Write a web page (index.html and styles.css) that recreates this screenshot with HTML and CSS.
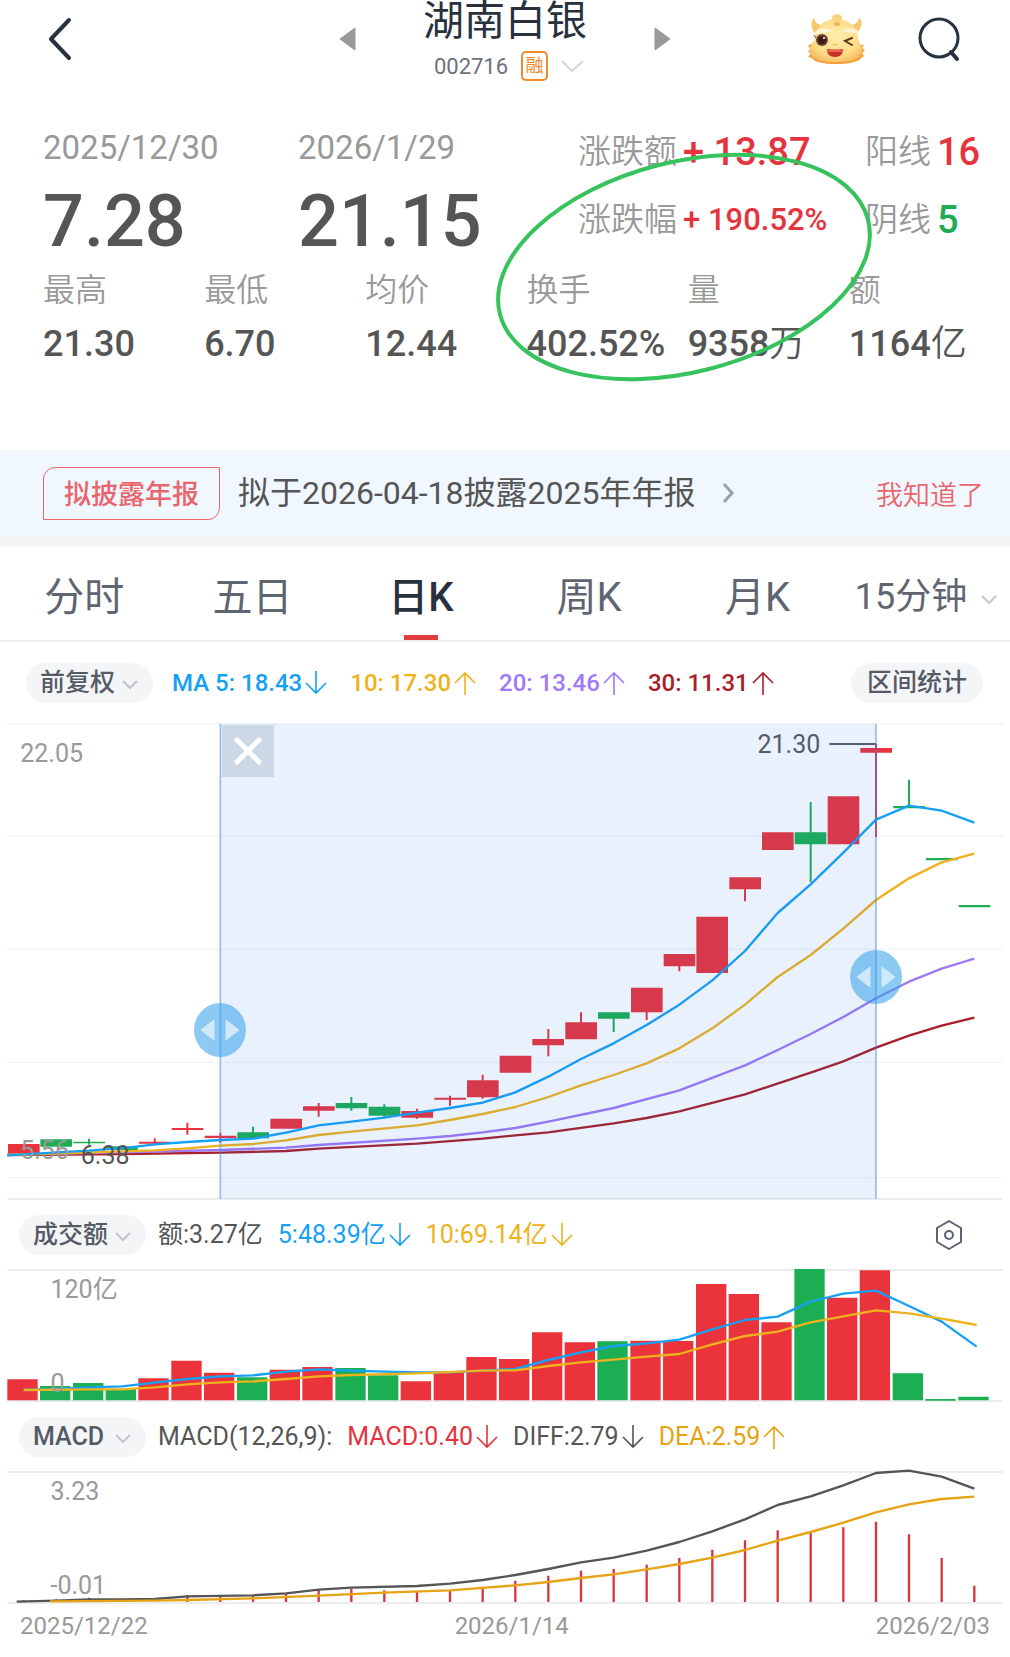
FILE: index.html
```html
<!DOCTYPE html>
<html lang="zh-CN">
<head>
<meta charset="utf-8">
<meta name="viewport" content="width=device-width, initial-scale=1">
<title>湖南白银 002716</title>
<link rel="stylesheet" href="styles.css">
</head>
<body>
<svg class="defs" aria-hidden="true">
  <symbol id="down" viewBox="0 0 22 24"><path d="M11 0V22M1 12L11 22L21 12" fill="none" stroke="currentColor" stroke-width="1.6"/></symbol>
  <symbol id="up" viewBox="0 0 22 24"><path d="M11 24V2M1 12L11 2L21 12" fill="none" stroke="currentColor" stroke-width="1.6"/></symbol>
  <symbol id="chev" viewBox="0 0 16 10"><path d="M1 1L8 8L15 1" fill="none" stroke="currentColor" stroke-width="2"/></symbol>
  <symbol id="drag" viewBox="0 0 52 54"><ellipse cx="26" cy="27" rx="26" ry="27" fill="#2f9fea" fill-opacity=".55"/><path d="M7 27L20 17V37ZM45 27L32 17V37Z" fill="#cfe9fb" stroke="#cfe9fb" stroke-width="1" stroke-linejoin="round"/></symbol>
</svg>

<header class="topbar">
  <button class="icon-btn back" aria-label="返回"><svg width="28" height="46" viewBox="0 0 28 46"><path d="M24 4L6 23L24 42" fill="none" stroke="#27323e" stroke-width="4" stroke-linecap="round" stroke-linejoin="round"/></svg></button>
  <div class="stock">
    <button class="icon-btn" aria-label="上一只"><svg width="17" height="24" viewBox="0 0 17 24"><path d="M16 1V23L1 12Z" fill="#999" stroke="#999" stroke-linejoin="round"/></svg></button>
    <div class="stock-name">
      <h1>湖南白银</h1>
      <div class="code"><span>002716</span><span class="margin-tag">融</span><svg width="23" height="13" viewBox="0 0 23 13"><path d="M1 1L11 11L22 1" fill="none" stroke="#d3d6dc" stroke-width="2"/></svg></div>
    </div>
    <button class="icon-btn" aria-label="下一只"><svg width="17" height="24" viewBox="0 0 17 24"><path d="M1 1V23L16 12Z" fill="#999" stroke="#999" stroke-linejoin="round"/></svg></button>
  </div>
  <div class="tools">
    <button class="icon-btn" aria-label="助手">
      <svg width="58" height="54" viewBox="0 0 58 54">
        <defs>
          <radialGradient id="face" cx=".5" cy=".4" r=".65"><stop offset="0" stop-color="#ffedb0"/><stop offset=".7" stop-color="#fcdc86"/><stop offset="1" stop-color="#f7b95c"/></radialGradient>
        </defs>
        <path d="M8 22C3 15 4 8 7 6C8 11 12 13 16 14ZM49 22C56 15 56 8 52 6C51 11 47 13 43 14Z" fill="#f8c66d"/>
        <path d="M3 32L1 35L4 36L1 40L4 41L1 45L5 46C8 54 50 54 54 46L57 44L55 41L58 38L55 36L57 33Z" fill="#f5a03c"/>
        <path d="M29 7C42 7 50 14 51 26C52 31 56 35 55 40C53 48 43 50 29 50C14 50 4 48 3 40C2 34 6 31 8 26C9 14 17 7 29 7Z" fill="url(#face)"/>
        <ellipse cx="30" cy="6" rx="5" ry="4" fill="#f9d27c"/><ellipse cx="30" cy="12" rx="3" ry="2" fill="#efb257"/>
        <path d="M7 22C10 15 20 15 26 19C20 20 13 21 10 22ZM34 19C40 15 49 15 53 21C47 21 40 21 34 19Z" fill="#fff4d2"/>
        <ellipse cx="15" cy="28" rx="6" ry="6" fill="#754030"/><circle cx="15" cy="28" r="4" fill="#3a1d1a"/><circle cx="17" cy="26" r="1" fill="#fff"/>
        <path d="M9 26L7 23" stroke="#6b3922" stroke-width="1"/>
        <path d="M45 26L38 29L45 33" fill="none" stroke="#64351f" stroke-width="2" stroke-linecap="round"/>
        <path d="M25 32L28 34L31 32Z" fill="#f5bf61"/>
        <path d="M20 37Q28 38 36 37Q36 45 28 45Q20 45 20 37Z" fill="#c82f28"/><path d="M21 38H35V40H21Z" fill="#ee6350"/>
      </svg>
    </button>
    <button class="icon-btn" aria-label="搜索"><svg width="42" height="46" viewBox="0 0 42 46"><circle cx="21" cy="22" r="19" fill="none" stroke="#27323e" stroke-width="3"/><path d="M33 36L39 43" stroke="#27323e" stroke-width="4" stroke-linecap="round"/></svg></button>
  </div>
</header>

<main>
<section class="summary">
  <div class="summary-top">
    <div><p class="date">2025/12/30</p><p class="price">7.28</p></div>
    <div><p class="date">2026/1/29</p><p class="price">21.15</p></div>
    <div class="pairs">
      <p>涨跌额<b class="red big">+ 13.87</b></p>
      <p>涨跌幅<b class="red">+ 190.52%</b></p>
    </div>
    <div class="pairs">
      <p>阳线<b class="red big">16</b></p>
      <p>阴线<b class="green big">5</b></p>
    </div>
  </div>
  <dl class="stats">
    <div><dt>最高</dt><dd>21.30</dd></div>
    <div><dt>最低</dt><dd>6.70</dd></div>
    <div><dt>均价</dt><dd>12.44</dd></div>
    <div><dt>换手</dt><dd>402.52%</dd></div>
    <div><dt>量</dt><dd>9358<span class="unit">万</span></dd></div>
    <div><dt>额</dt><dd>1164<span class="unit">亿</span></dd></div>
  </dl>
  <svg class="circle-mark" width="400" height="250" viewBox="484 142 400 250" aria-hidden="true"><ellipse cx="684" cy="267" rx="190" ry="105" transform="rotate(-14.4 684 267)" fill="none" stroke="#36c25c" stroke-width="4"/></svg>
</section>

<section class="notice">
  <span class="notice-tag">拟披露年报</span>
  <a href="#report" class="notice-link">拟于2026-04-18披露2025年年报<svg width="13" height="22" viewBox="0 0 13 22"><path d="M2 2L10 11L2 20" fill="none" stroke="#9aa1ab" stroke-width="3"/></svg></a>
  <button class="dismiss">我知道了</button>
</section>

<nav class="tabs" aria-label="周期">
  <a href="#fs">分时</a>
  <a href="#d5">五日</a>
  <a href="#dk" class="active" aria-current="page">日K</a>
  <a href="#wk">周K</a>
  <a href="#mk">月K</a>
  <label class="period"><select aria-label="分钟周期"><option>15分钟</option></select><svg width="16" height="10"><use href="#chev"/></svg></label>
</nav>

<div class="bar ma-bar">
  <label class="pill"><select aria-label="复权"><option>前复权</option></select><svg width="16" height="10"><use href="#chev"/></svg></label>
  <div class="legend ma-legend">
    <span class="c-blue">MA 5: 18.43<svg width="22" height="24"><use href="#down"/></svg></span>
    <span class="c-yellow">10: 17.30<svg width="22" height="24"><use href="#up"/></svg></span>
    <span class="c-purple">20: 13.46<svg width="22" height="24"><use href="#up"/></svg></span>
    <span class="c-dark">30: 11.31<svg width="22" height="24"><use href="#up"/></svg></span>
  </div>
  <button class="pill range-btn">区间统计</button>
</div>

<section class="chart kline" aria-label="日K线">
  <svg class="plot" viewBox="0 0 3030 1470">
    <g stroke="#f1f1f3" stroke-width="4" stroke-dasharray="18 6"><path d="M22 41H3008M22 379H3008M22 718H3008M22 1057H3008"/></g>
    <path d="M22 1403H3008" stroke="#f4f4f6" stroke-width="4"/>
    <path d="M22 1467H3008" stroke="#e4e5e7" stroke-width="5"/>
    <g class="up-fill">
      <path d="M24 1302h95v33h-95zM417 1295h95v6h-95zM515 1254h95v6h-95zM614 1277h95v7h-95zM811 1226h95v30h-95zM909 1189h95v13h-95zM1204 1203h95v20h-95zM1303 1163h95v6h-95zM1401 1111h95v51h-95zM1499 1037h95v51h-95zM1597 987h95v19h-95zM1696 937h95v51h-95zM1893 833h95v74h-95zM1991 732h95v37h-95zM2089 620h95v169h-95zM2188 502h95v36h-95zM2286 367h95v53h-95zM2483 259h95v144h-95zM2581 114h95v14h-95z"/>
      <path d="M464 1285v19M562 1238v36M661 1268v30M956 1179v41M1251 1196v30M1350 1157v30M1448 1094v72M1645 957v82M1743 907v40M1940 900v30M2038 760v24M2235 530v44M2628 102v279"/>
    </g>
    <g class="down-fill">
      <path d="M121 1288h95v22h-95zM220 1295h95v5h-95zM318 1309h95v11h-95zM712 1267h95v18h-95zM1007 1179h95v16h-95zM1106 1190h95v27h-95zM1794 907h95v19h-95zM2384 367h95v36h-95zM2680 288h95v7h-95zM2778 444h95v7h-95zM2876 585h95v7h-95z"/>
      <path d="M267 1286v18M759 1250v20M1054 1161v41M1153 1183v39M1841 920v46M2432 276v240M2727 209v83"/>
    </g>
    <g class="line">
      <polyline class="s-dark" points="22,1335 366,1332 661,1328 858,1323 956,1316 1251,1301 1448,1286 1546,1276 1645,1267 1841,1240 1940,1224 2038,1204 2235,1153 2432,1088 2530,1054 2628,1013 2727,977 2825,947 2923,923"/>
      <polyline class="s-purple" points="22,1334 366,1327 661,1320 858,1313 956,1305 1251,1286 1350,1278 1448,1267 1546,1254 1645,1235 1841,1194 2038,1141 2235,1066 2333,1020 2432,972 2530,921 2628,865 2727,815 2825,776 2923,746"/>
      <polyline class="s-yellow" points="22,1335 464,1321 562,1315 661,1307 759,1302 858,1291 956,1275 1054,1265 1251,1246 1350,1230 1448,1212 1546,1191 1645,1161 1743,1126 1841,1095 1940,1060 2038,1015 2137,955 2235,884 2333,801 2432,735 2530,656 2628,570 2727,505 2825,457 2923,431"/>
      <polyline class="s-blue" points="22,1336 169,1327 267,1322 390,1312 464,1303 562,1296 661,1290 759,1286 858,1268 956,1246 1054,1235 1153,1223 1251,1208 1350,1194 1448,1178 1546,1147 1645,1100 1743,1047 1841,1000 1940,945 2038,884 2137,811 2235,723 2333,609 2432,523 2530,428 2628,329 2727,287 2825,302 2923,338"/>
    </g>
    <path d="M2488 102H2628" stroke="#555b66" stroke-width="6"/>
    <rect x="661" y="41" width="1967" height="1426" fill="#287ae6" fill-opacity=".1"/>
    <path d="M661 41V1467M2628 41V1467" stroke="#3c82e6" stroke-opacity=".5" stroke-width="5"/>
  </svg>
  <span class="label k-max">22.05</span>
  <span class="label k-min">5.56</span>
  <span class="label k-low">6.38</span>
  <span class="label k-high">21.30</span>
  <button class="close" aria-label="关闭区间"><svg width="28" height="28" viewBox="0 0 28 28"><path d="M3 3L25 25M25 3L3 25" stroke="#fff" stroke-width="5" stroke-linecap="round"/></svg></button>
  <button class="handle start" aria-label="区间起点"><svg width="52" height="54"><use href="#drag"/></svg></button>
  <button class="handle end" aria-label="区间终点"><svg width="52" height="54"><use href="#drag"/></svg></button>
</section>

<div class="bar sub-bar">
  <label class="pill"><select aria-label="成交额指标"><option>成交额</option></select><svg width="16" height="10"><use href="#chev"/></svg></label>
  <div class="legend">
    <span>额:3.27亿</span>
    <span class="c-blue">5:48.39亿<svg width="22" height="24"><use href="#down"/></svg></span>
    <span class="c-yellow">10:69.14亿<svg width="22" height="24"><use href="#down"/></svg></span>
  </div>
  <button class="icon-btn settings" aria-label="指标设置"><svg width="28" height="32" viewBox="0 0 28 32"><path d="M14 2L26 9V23L14 30L2 23V9Z" fill="none" stroke="#5c6370" stroke-width="2" stroke-linejoin="round"/><circle cx="14" cy="16" r="4" fill="none" stroke="#5c6370" stroke-width="2"/></svg></button>
</div>

<section class="chart" aria-label="成交额">
  <svg class="plot" viewBox="0 225 3030 411">
    <path d="M22 240H3008M22 633H3008" stroke="#e6e7e9" stroke-width="5"/>
    <path class="up-fill" d="M22 568h91V631h-91zM415 565h91V631h-91zM514 512h91V631h-91zM612 548h91V631h-91zM809 539h91V631h-91zM907 531h91V631h-91zM1202 574h91V631h-91zM1301 548h91V631h-91zM1399 501h91V631h-91zM1497 507h91V631h-91zM1596 427h91V631h-91zM1694 457h91V631h-91zM1891 452h91V631h-91zM1989 453h91V631h-91zM2088 282h91V631h-91zM2186 312h91V631h-91zM2284 397h91V631h-91zM2481 323h91V631h-91zM2579 241h91V631h-91z"/>
    <path class="down-fill" d="M120 588h91V631h-91zM219 579h91V631h-91zM317 597h91V631h-91zM711 562h91V631h-91zM1006 534h91V631h-91zM1104 556h91V631h-91zM1792 454h91V631h-91zM2383 237h91V631h-91zM2678 550h91V631h-91zM2776 627h91V632h-91zM2875 620h91V631h-91z"/>
    <g class="line">
      <polyline class="s-blue" points="71,600 169,597 267,592 366,589 464,578 562,567 661,559 759,556 858,545 956,538 1054,542 1153,545 1251,547 1350,547 1448,542 1546,537 1645,510 1743,487 1841,468 1940,460 2038,449 2137,418 2235,390 2333,380 2432,335 2530,311 2628,302 2727,348 2825,395 2930,470"/>
      <polyline class="s-yellow" points="71,600 267,598 366,598 464,592 562,583 661,577 759,574 858,567 956,559 1054,555 1251,550 1448,542 1546,541 1645,528 1743,517 1841,509 1940,500 2038,492 2137,463 2235,438 2333,425 2432,397 2530,379 2628,361 2727,370 2825,386 2930,405"/>
    </g>
  </svg>
  <span class="label sub-max">120亿</span>
  <span class="label sub-min">0</span>
</section>

<div class="bar sub-bar">
  <label class="pill"><select aria-label="MACD指标"><option>MACD</option></select><svg width="16" height="10"><use href="#chev"/></svg></label>
  <div class="legend">
    <span>MACD(12,26,9):</span>
    <span class="red">MACD:0.40<svg width="22" height="24"><use href="#down"/></svg></span>
    <span>DIFF:2.79<svg width="22" height="24"><use href="#down"/></svg></span>
    <span class="c-amber">DEA:2.59<svg width="22" height="24"><use href="#up"/></svg></span>
  </div>
</div>

<section class="chart" aria-label="MACD">
  <svg class="plot" viewBox="0 831 3030 411">
    <path d="M22 846H3008M22 1239H3008" stroke="#e6e7e9" stroke-width="5"/>
    <path class="macd-bars" d="M71 1230V1236M169 1228V1236M267 1223V1236M562 1215V1236M661 1215V1236M759 1217V1236M858 1212V1236M956 1200V1236M1054 1196V1236M1153 1201V1236M1251 1205V1236M1350 1202V1236M1448 1192V1236M1546 1172V1236M1645 1157V1236M1743 1142V1236M1841 1137V1236M1940 1124V1236M2038 1104V1236M2137 1079V1236M2235 1051V1236M2333 1021V1236M2432 1027V1236M2530 1012V1236M2628 995V1236M2727 1033V1236M2825 1104V1236M2923 1187V1236"/>
    <g class="line">
      <polyline class="s-grey" points="50,1235 169,1232 267,1228 366,1228 464,1227 562,1219 759,1216 858,1210 956,1199 1054,1193 1251,1188 1350,1181 1448,1170 1546,1155 1645,1137 1743,1117 1841,1103 1940,1082 2038,1056 2137,1024 2235,988 2333,945 2432,919 2530,886 2628,849 2727,842 2825,860 2923,896"/>
      <polyline class="s-amber" points="150,1234 464,1232 562,1230 759,1225 956,1217 1153,1208 1350,1201 1546,1186 1645,1176 1743,1164 1841,1153 1940,1138 2038,1122 2137,1103 2235,1080 2333,1052 2432,1026 2530,998 2628,967 2727,943 2825,927 2923,920"/>
    </g>
  </svg>
  <span class="label sub-max">3.23</span>
  <span class="label sub-min">-0.01</span>
</section>

<footer class="dates"><span>2025/12/22</span><span>2026/1/14</span><span>2026/2/03</span></footer>
</main>
</body>
</html>
```
FILE: styles.css
```css
* { box-sizing: border-box; }

body {
  margin: 0;
  background: #fff;
  color: #555;
  font-family: Roboto, "Noto Sans CJK SC", sans-serif;
  font-size: 25px;
}

h1, p, dl, dd { margin: 0; }
svg { display: block; flex: none; }
button, select { font: inherit; color: inherit; border: 0; background: none; padding: 0; }
select { appearance: none; outline: 0; }
a { color: inherit; text-decoration: none; }
.defs { position: absolute; width: 0; height: 0; }

.red { color: #e4353e; }
.green { color: #1eab54; }
.c-blue { color: #16a0f6; }
.c-yellow { color: #efb21c; }
.c-amber { color: #e6a414; }
.c-purple { color: #a078f8; }
.c-dark { color: #aa1e28; }

/* Top bar */
.topbar {
  display: grid;
  grid-template-columns: 1fr auto 1fr;
  height: 100px;
  padding: 0 45px;
}
.icon-btn { display: flex; align-items: center; height: 78px; }
.stock { display: flex; gap: 67px; }
.stock-name { display: flex; flex-direction: column; align-items: center; gap: 9px; }
.stock-name h1 { color: #27323e; font-size: 41px; line-height: 42px; font-weight: 400; }
.code { display: flex; align-items: center; gap: 13px; height: 30px; padding-left: 8px; color: #6c717c; font-size: 22px; }
.margin-tag {
  width: 27px;
  height: 30px;
  border: 2px solid #f08a2c;
  border-radius: 5px;
  color: #f08a2c;
  font-size: 18px;
  line-height: 26px;
  display: flex;
  justify-content: center;
}
.tools { display: flex; justify-content: flex-end; gap: 53px; padding-right: 5px; }

/* Summary */
.summary { position: relative; height: 350px; padding: 28px 0 0 43px; }
.summary-top { display: grid; grid-template-columns: 255fr 280fr 287fr 145fr; height: 142px; }
.summary-top p { white-space: nowrap; }
.date { color: #999; font-size: 33px; line-height: 40px; }
.price { margin-top: 14px; font-size: 72px; line-height: 80px; font-weight: 500; }
.pairs { display: flex; flex-direction: column; gap: 28px; padding-top: 4px; color: #999; font-weight: 350; font-size: 33px; }
.pairs p { display: flex; align-items: center; gap: 6px; line-height: 40px; }
.pairs b { font-weight: 500; font-size: 31px; }
.pairs .big { font-size: 38px; }
.stats { display: grid; grid-template-columns: repeat(6, 1fr); }
.stats dt { color: #999; font-weight: 350; font-size: 32px; line-height: 40px; }
.stats dd { margin-top: 14px; font-size: 36px; font-weight: 500; line-height: 40px; white-space: nowrap; }
.unit { font-weight: 350; }
.circle-mark { position: absolute; left: 484px; top: 42px; pointer-events: none; }

/* Notice */
.notice {
  display: flex;
  align-items: center;
  height: 97px;
  padding: 0 26px 0 43px;
  background: #f0f7ff;
  border-bottom: 11px solid #f5f5f5;
}
.notice-tag {
  width: 177px;
  padding-top: 3px;
  border: 1px solid #e8666c;
  border-radius: 12px 0;
  color: #e8666c;
  font-size: 27px;
  font-weight: 500;
  line-height: 48px;
  text-align: center;
}
.notice-link { display: flex; align-items: center; gap: 26px; margin-left: 18px; font-size: 32px; line-height: 40px; }
.dismiss { margin-left: auto; color: #e8666c; font-size: 27px; font-weight: 350; }

/* Period tabs */
.tabs {
  display: grid;
  grid-template-columns: repeat(6, 1fr);
  height: 95px;
  border-bottom: 2px solid #f0f0f2;
  color: #5f6570;
  font-size: 40px;
  line-height: 102px;
  text-align: center;
}
.tabs a { height: 93px; }
.tabs .active { position: relative; color: #27323e; font-weight: 500; }
.tabs .active::after {
  content: "";
  position: absolute;
  left: 50%;
  bottom: 0;
  width: 34px;
  height: 5px;
  margin-left: -17px;
  background: #e03c40;
}
.period { display: flex; align-items: center; justify-content: center; gap: 13px; padding-top: 6px; font-size: 36px; line-height: 40px; color: #5f6570; }
.period select { width: 113px; height: 60px; }
.period svg { color: #c3c7ce; margin-top: 6px; }

/* Indicator bars */
.bar { display: flex; align-items: center; line-height: 30px; }
.ma-bar { height: 68px; padding: 14px 27px 0 26px; }
.sub-bar { height: 65px; padding: 5px 47px 0 19px; }
.pill { position: relative; width: 127px; height: 40px; border-radius: 20px; background: #f4f5f7; color: #555b66; font-size: 25px; font-weight: 500; }
.pill select { width: 100%; height: 40px; padding-left: 14px; }
.pill svg { position: absolute; right: 15px; top: 17px; color: #c0c4cb; }
.range-btn { width: 132px; margin-left: auto; }
.legend { display: flex; gap: 15px; margin-left: 12px; white-space: nowrap; }
.legend span { display: flex; align-items: center; gap: 3px; }
.ma-legend { gap: 23px; margin-left: 19px; font-size: 24px; font-weight: 500; }
.settings { height: 40px; margin-left: auto; }

/* Charts */
.chart { position: relative; }
.plot { width: 100%; height: auto; }
.label { position: absolute; color: #999; line-height: 30px; }
.k-max { left: 2%; top: 6%; }
.k-min { left: 2%; top: 87%; }
.k-low { left: 8%; top: 88%; color: #555; }
.k-high { left: 75%; top: 4%; color: #555b66; }
.sub-max { left: 5%; top: 7%; }
.sub-min { left: 5%; top: 76%; }
.close {
  position: absolute;
  left: 22%;
  top: 3%;
  width: 52px;
  height: 52px;
  display: flex;
  align-items: center;
  justify-content: center;
  background: #cdd8e6;
}
.handle { position: absolute; width: 52px; height: 54px; transform: translate(-50%, -50%); }
.start { left: 21.8%; top: 65.4%; }
.end { left: 86.7%; top: 54.4%; }

.up-fill { fill: #ea333b; stroke: #ea333b; stroke-width: 0; }
.down-fill { fill: #1bae52; stroke: #1bae52; stroke-width: 0; }
g.up-fill path + path, g.down-fill path + path { stroke-width: 6; }
.macd-bars { stroke: #d8363e; stroke-width: 7; }
.line { fill: none; stroke-width: 7; stroke-linejoin: round; }
.s-blue { stroke: #16a0f6; }
.s-yellow { stroke: #efb21c; }
.s-purple { stroke: #a078f8; }
.s-dark { stroke: #aa1e28; }
.s-grey { stroke: #555; }
.s-amber { stroke: #e6a414; }

.dates { display: flex; justify-content: space-between; padding: 6px 20px 14px; color: #999; font-size: 24px; line-height: 33px; }
```
